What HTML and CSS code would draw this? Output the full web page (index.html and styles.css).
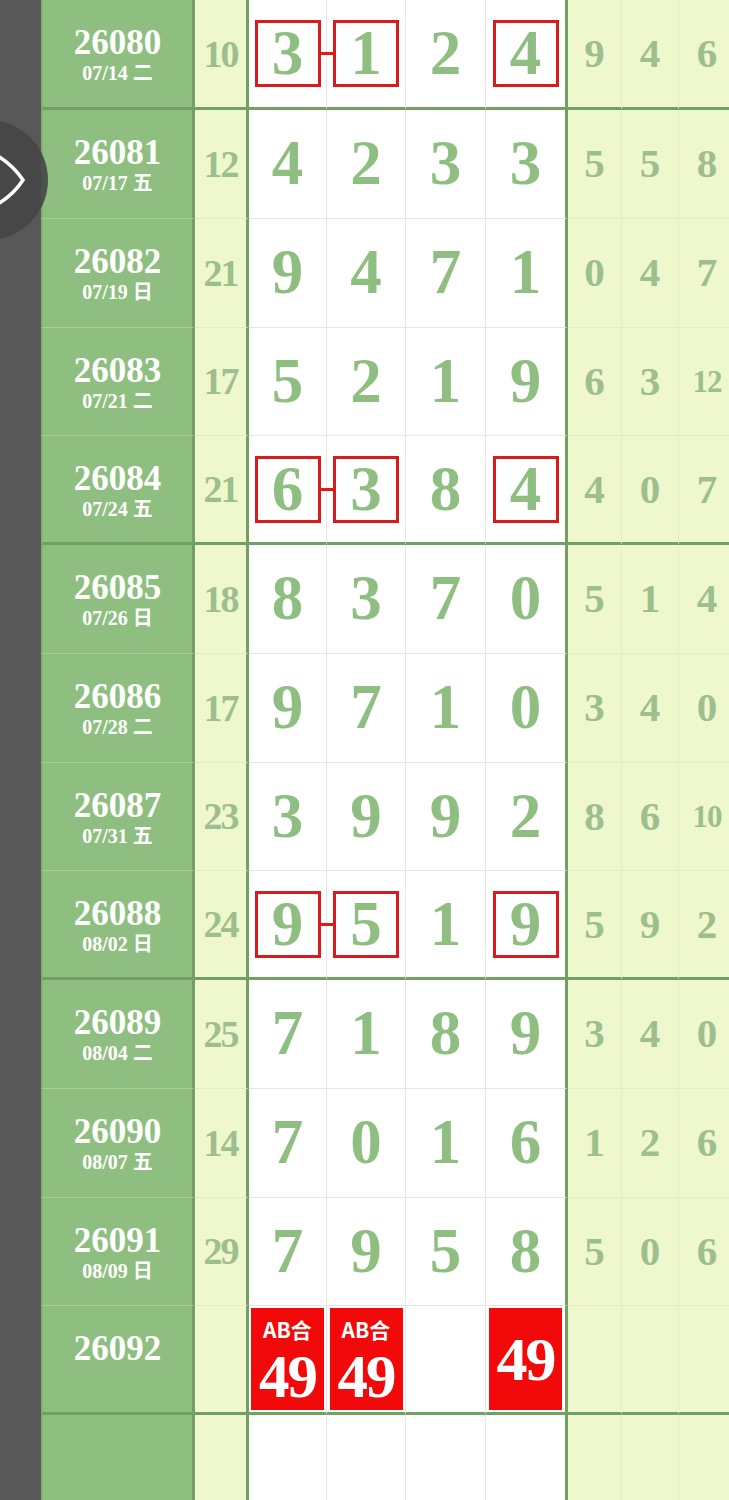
FILE: index.html
```html
<!DOCTYPE html>
<html>
<head>
    <meta charset="utf-8">
    <title>走势图</title>
    <link rel="stylesheet" href="styles.css">
</head>
<body>
    <div class="handle"></div>
    <svg class="eye" width="30" height="60" viewBox="0 0 30 60">
        <path d="M-2 6 Q14 16 23 30 Q14 44 -2 54" fill="none" stroke="#fff" stroke-width="3.5" stroke-linecap="round"/>
    </svg>

    <div class="chart">
        <div class="row first grp">
            <div class="cell issue"><span class="no">26080</span><span class="date">07/14 二</span></div>
            <div class="cell sum">10</div>
            <div class="cell d d1"><span class="hit link">3</span></div>
            <div class="cell d d2"><span class="hit">1</span></div>
            <div class="cell d d3">2</div>
            <div class="cell d d4"><span class="hit">4</span></div>
            <div class="cell r r1">9</div>
            <div class="cell r r2">4</div>
            <div class="cell r r3">6</div>
        </div>
        <div class="row">
            <div class="cell issue"><span class="no">26081</span><span class="date">07/17 五</span></div>
            <div class="cell sum">12</div>
            <div class="cell d d1">4</div>
            <div class="cell d d2">2</div>
            <div class="cell d d3">3</div>
            <div class="cell d d4">3</div>
            <div class="cell r r1">5</div>
            <div class="cell r r2">5</div>
            <div class="cell r r3">8</div>
        </div>
        <div class="row">
            <div class="cell issue"><span class="no">26082</span><span class="date">07/19 日</span></div>
            <div class="cell sum">21</div>
            <div class="cell d d1">9</div>
            <div class="cell d d2">4</div>
            <div class="cell d d3">7</div>
            <div class="cell d d4">1</div>
            <div class="cell r r1">0</div>
            <div class="cell r r2">4</div>
            <div class="cell r r3">7</div>
        </div>
        <div class="row">
            <div class="cell issue"><span class="no">26083</span><span class="date">07/21 二</span></div>
            <div class="cell sum">17</div>
            <div class="cell d d1">5</div>
            <div class="cell d d2">2</div>
            <div class="cell d d3">1</div>
            <div class="cell d d4">9</div>
            <div class="cell r r1">6</div>
            <div class="cell r r2">3</div>
            <div class="cell r r3 two">12</div>
        </div>
        <div class="row grp">
            <div class="cell issue"><span class="no">26084</span><span class="date">07/24 五</span></div>
            <div class="cell sum">21</div>
            <div class="cell d d1"><span class="hit link">6</span></div>
            <div class="cell d d2"><span class="hit">3</span></div>
            <div class="cell d d3">8</div>
            <div class="cell d d4"><span class="hit">4</span></div>
            <div class="cell r r1">4</div>
            <div class="cell r r2">0</div>
            <div class="cell r r3">7</div>
        </div>
        <div class="row">
            <div class="cell issue"><span class="no">26085</span><span class="date">07/26 日</span></div>
            <div class="cell sum">18</div>
            <div class="cell d d1">8</div>
            <div class="cell d d2">3</div>
            <div class="cell d d3">7</div>
            <div class="cell d d4">0</div>
            <div class="cell r r1">5</div>
            <div class="cell r r2">1</div>
            <div class="cell r r3">4</div>
        </div>
        <div class="row">
            <div class="cell issue"><span class="no">26086</span><span class="date">07/28 二</span></div>
            <div class="cell sum">17</div>
            <div class="cell d d1">9</div>
            <div class="cell d d2">7</div>
            <div class="cell d d3">1</div>
            <div class="cell d d4">0</div>
            <div class="cell r r1">3</div>
            <div class="cell r r2">4</div>
            <div class="cell r r3">0</div>
        </div>
        <div class="row">
            <div class="cell issue"><span class="no">26087</span><span class="date">07/31 五</span></div>
            <div class="cell sum">23</div>
            <div class="cell d d1">3</div>
            <div class="cell d d2">9</div>
            <div class="cell d d3">9</div>
            <div class="cell d d4">2</div>
            <div class="cell r r1">8</div>
            <div class="cell r r2">6</div>
            <div class="cell r r3 two">10</div>
        </div>
        <div class="row grp">
            <div class="cell issue"><span class="no">26088</span><span class="date">08/02 日</span></div>
            <div class="cell sum">24</div>
            <div class="cell d d1"><span class="hit link">9</span></div>
            <div class="cell d d2"><span class="hit">5</span></div>
            <div class="cell d d3">1</div>
            <div class="cell d d4"><span class="hit">9</span></div>
            <div class="cell r r1">5</div>
            <div class="cell r r2">9</div>
            <div class="cell r r3">2</div>
        </div>
        <div class="row">
            <div class="cell issue"><span class="no">26089</span><span class="date">08/04 二</span></div>
            <div class="cell sum">25</div>
            <div class="cell d d1">7</div>
            <div class="cell d d2">1</div>
            <div class="cell d d3">8</div>
            <div class="cell d d4">9</div>
            <div class="cell r r1">3</div>
            <div class="cell r r2">4</div>
            <div class="cell r r3">0</div>
        </div>
        <div class="row">
            <div class="cell issue"><span class="no">26090</span><span class="date">08/07 五</span></div>
            <div class="cell sum">14</div>
            <div class="cell d d1">7</div>
            <div class="cell d d2">0</div>
            <div class="cell d d3">1</div>
            <div class="cell d d4">6</div>
            <div class="cell r r1">1</div>
            <div class="cell r r2">2</div>
            <div class="cell r r3">6</div>
        </div>
        <div class="row">
            <div class="cell issue"><span class="no">26091</span><span class="date">08/09 日</span></div>
            <div class="cell sum">29</div>
            <div class="cell d d1">7</div>
            <div class="cell d d2">9</div>
            <div class="cell d d3">5</div>
            <div class="cell d d4">8</div>
            <div class="cell r r1">5</div>
            <div class="cell r r2">0</div>
            <div class="cell r r3">6</div>
        </div>
        <div class="row grp">
            <div class="cell issue"><span class="no">26092</span><span class="date">&nbsp;</span></div>
            <div class="cell sum"></div>
            <div class="cell d d1"><span class="ab"><span class="tag">AB合</span><span class="num">49</span></span></div>
            <div class="cell d d2"><span class="ab"><span class="tag">AB合</span><span class="num">49</span></span></div>
            <div class="cell d d3"></div>
            <div class="cell d d4"><span class="ab solo"><span class="num">49</span></span></div>
            <div class="cell r r1"></div>
            <div class="cell r r2"></div>
            <div class="cell r r3"></div>
        </div>
        <div class="row last">
            <div class="cell issue"></div>
            <div class="cell sum"></div>
            <div class="cell d d1"></div>
            <div class="cell d d2"></div>
            <div class="cell d d3"></div>
            <div class="cell d d4"></div>
            <div class="cell r r1"></div>
            <div class="cell r r2"></div>
            <div class="cell r r3"></div>
        </div>
    </div>
</body>
</html>
```

FILE: styles.css
```css
body {
    margin: 0;
    background: #585858;
    overflow-x: hidden;
    font-family: "Liberation Serif", "Noto Sans CJK SC", serif;
    font-weight: bold;
}
.handle {
    position: fixed;
    left: -72px;
    top: 120px;
    width: 120px;
    height: 120px;
    border-radius: 50%;
    background: rgba(70, 70, 70, 0.9);
    z-index: 2;
}
.eye {
    position: fixed;
    left: 0;
    top: 150px;
    z-index: 3;
}
.chart {
    margin-left: 41px;
    width: 720px;
}
.row {
    display: flex;
    height: 108.75px;
}
.row.first {
    height: 110px;
}
.row.last {
    height: 120px;
}
.cell {
    box-sizing: border-box;
    flex: none;
    display: flex;
    align-items: center;
    justify-content: center;
    border-bottom: 1px solid #e6e6e6;
    line-height: 1;
}
.issue {
    width: 154px;
    flex-direction: column;
    background: #8fbf80;
    color: #fff;
    border-left: 2px solid #80b072;
    border-right: 3px solid #72a064;
    border-bottom-color: #a8d199;
    padding-top: 3px;
}
.issue .no {
    font-size: 35px;
    line-height: 36px;
}
.issue .date {
    font-size: 20px;
    line-height: 24px;
}
.sum {
    width: 54px;
    background: #eff7cd;
    color: #9dbe8d;
    font-size: 38px;
    letter-spacing: -2px;
    border-right: 3px solid #72a064;
    border-bottom-color: #e1edc0;
}
.d {
    background: #fff;
    color: #8fbf80;
    font-size: 63px;
    border-right: 1px solid #e6e6e6;
}
.d1 { width: 78px; }
.d2 { width: 79px; }
.d3 { width: 80px; }
.d4 {
    width: 82px;
    border-right: 3px solid #72a064;
}
.r {
    background: #eff7cd;
    color: #9dbe8d;
    font-size: 41px;
    border-right: 1px solid #e3efc4;
    border-bottom-color: #e1edc0;
}
.r.two {
    font-size: 31px;
    letter-spacing: -1px;
}
.r1 { width: 54px; }
.r2 { width: 57px; }
.r3 { width: 57px; }
.grp .cell {
    border-bottom: 3px solid #72a064;
}
.hit {
    box-sizing: border-box;
    position: relative;
    width: 66px;
    height: 67px;
    display: flex;
    align-items: center;
    justify-content: center;
    border: 3px solid #d81c1c;
}
.link::after {
    content: "";
    position: absolute;
    left: calc(100% + 3px);
    top: 50%;
    margin-top: -1.5px;
    width: 13px;
    height: 3px;
    background: #d81c1c;
}
.ab {
    box-sizing: border-box;
    width: 73px;
    height: 102px;
    display: flex;
    flex-direction: column;
    align-items: center;
    justify-content: center;
    background: #f20a0a;
    color: #fff;
}
.ab .tag {
    font-family: "Noto Sans CJK SC", sans-serif;
    font-size: 21px;
    line-height: 26px;
    margin-bottom: 10px;
}
.ab .num {
    font-size: 61px;
    line-height: 50px;
    letter-spacing: -2px;
}
.ab.solo .num {
    font-size: 62px;
}
```
